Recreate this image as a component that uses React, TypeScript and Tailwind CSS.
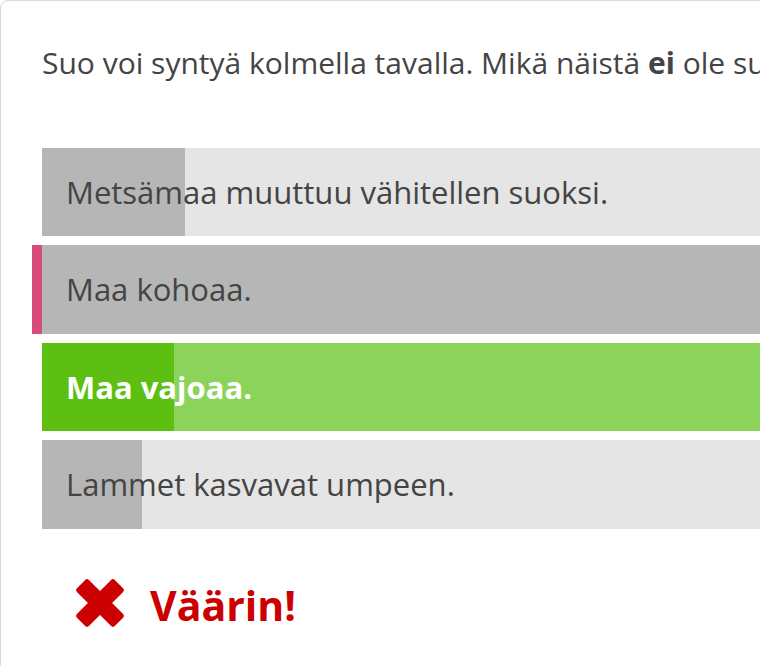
import React from "react";

const font = { fontFamily: '"Open Sans", "Noto Sans", sans-serif' };

function Row({
  text,
  fill,
  base,
  fillColor,
  bold,
  textColor,
  selected,
  h,
  mt,
}: {
  text: string;
  fill: number;
  base: string;
  fillColor: string;
  bold?: boolean;
  textColor: string;
  selected?: boolean;
  h: string;
  mt: string;
}) {
  return (
    <div className={`relative ${h} ${mt} ${selected ? "-ml-[10px] border-l-[10px] border-[#d94a7d]" : ""}`}>
      <div className={`absolute inset-0 ${base}`} />
      <div className={`absolute left-0 top-0 bottom-0 ${fillColor}`} style={{ width: fill }} />
      <div className={`relative flex h-full items-center pl-[24px] text-[31px] whitespace-nowrap ${bold ? "font-bold" : ""} ${textColor}`}>
        {text}
      </div>
    </div>
  );
}

export default function App() {
  return (
    <div className="w-[760px] h-[666px] overflow-hidden bg-white" style={font}>
      <div className="w-[1100px] h-[720px] rounded-[8px] border border-[#d9d9d9] pl-[41px] pt-[38px]">
        <p className="text-[30px] leading-[48px] text-[#444] whitespace-nowrap">
          Suo voi syntyä kolmella tavalla. Mikä näistä <b>ei</b> ole suon syntytapa?
        </p>
        <div className="mt-[61px] flex flex-col">
          <Row h="h-[88px]" mt="mt-0" text="Metsämaa muuttuu vähitellen suoksi." fill={143} base="bg-[#e5e5e5]" fillColor="bg-[#b6b6b6]" textColor="text-[#444]" />
          <Row h="h-[89px]" mt="mt-[9px]" text="Maa kohoaa." fill={0} base="bg-[#b6b6b6]" fillColor="bg-[#b6b6b6]" textColor="text-[#444]" selected />
          <Row h="h-[88px]" mt="mt-[9px]" text="Maa vajoaa." fill={132} base="bg-[#8bd35b]" fillColor="bg-[#5cbf12]" textColor="text-white" bold />
          <Row h="h-[89px]" mt="mt-[9px]" text="Lammet kasvavat umpeen." fill={100} base="bg-[#e5e5e5]" fillColor="bg-[#b6b6b6]" textColor="text-[#444]" />
        </div>
        <div className="mt-[49px] flex items-center pl-[33px]">
          <svg width="50" height="50" viewBox="0 0 50 50">
            <g transform="rotate(45 25 25)">
              <rect x="-1.8" y="16.5" width="53.6" height="17" rx="3" fill="#cc0000" />
              <rect x="16.5" y="-1.8" width="17" height="53.6" rx="3" fill="#cc0000" />
            </g>
          </svg>
          <span className="ml-[25px] mt-[4px] text-[41px] font-bold text-[#cc0000] leading-none">Väärin!</span>
        </div>
      </div>
    </div>
  );
}
